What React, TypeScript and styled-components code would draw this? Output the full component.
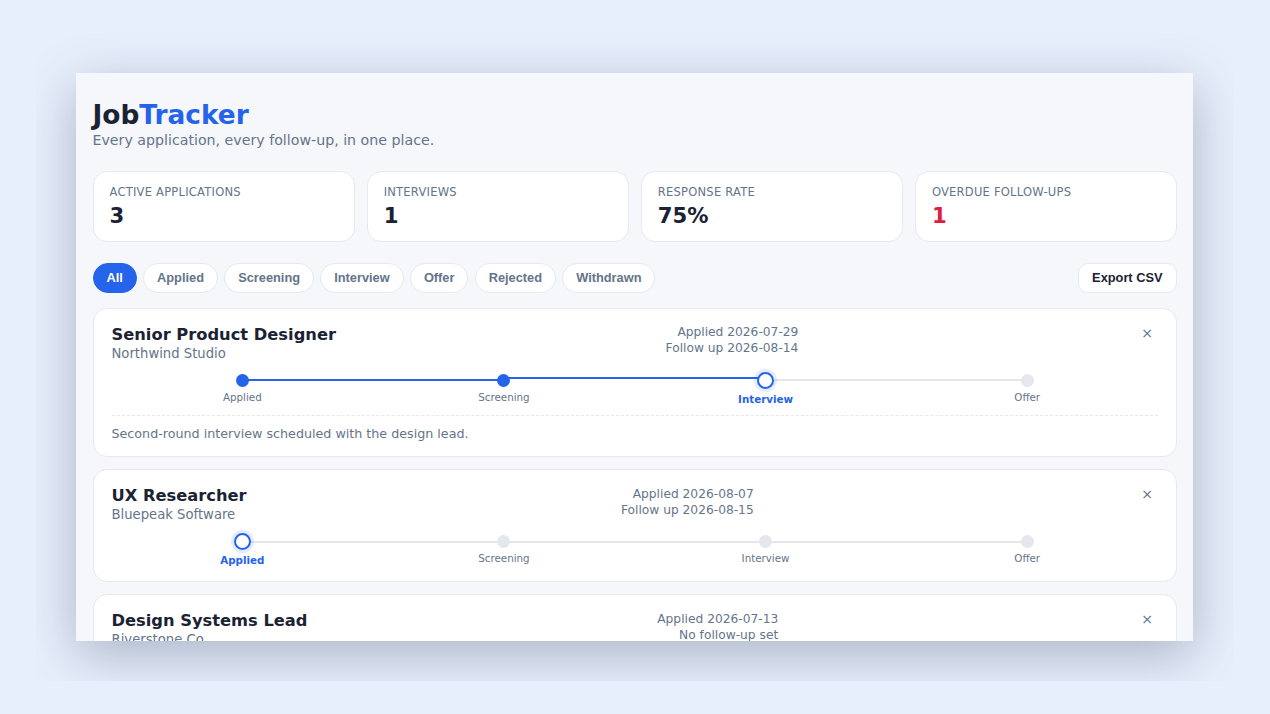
import * as React from 'react';
import styled, { createGlobalStyle } from 'styled-components';

const GlobalStyle = createGlobalStyle`
  html, body {
    margin: 0;
    height: 100%;
    background: #e8effc;
  }
  body {
    font-family: 'DejaVu Sans', sans-serif;
    color: #1a2233;
  }
`;

const Stage = styled.div`
  width: 1197px;
  height: 648px;
  margin: 33px 0 0 36px;
  padding: 40px;
  box-sizing: border-box;
  overflow: hidden;
`;

const Window = styled.div`
  height: 568px;
  overflow: hidden;
  padding: 25px 16px 0 16.5px;
  box-sizing: border-box;
  background: #f5f7fb;
  box-shadow: 0 14px 50px rgba(30, 45, 80, 0.3);
`;

const Title = styled.h1`
  margin: 0;
  font-size: 26.4px;
  line-height: 34px;
  font-weight: 700;
  color: #1a2233;
  span {
    color: #2563eb;
  }
`;

const Subtitle = styled.p`
  margin: 0;
  font-size: 14.2px;
  line-height: 17px;
  color: #64748b;
`;

const Stats = styled.div`
  display: grid;
  grid-template-columns: repeat(4, 1fr);
  gap: 12px;
  margin-top: 21.5px;
`;

const StatCard = styled.div`
  background: #fff;
  border: 1px solid #e6e9f0;
  border-radius: 14px;
  padding: 13.5px 16px;
  height: 71.5px;
  box-sizing: border-box;
`;

const StatLabel = styled.div`
  font-size: 11.52px;
  line-height: 14px;
  letter-spacing: 0.23px;
  color: #64748b;
  text-transform: uppercase;
`;

const StatValue = styled.div<{ $alert?: boolean }>`
  margin-top: 3.5px;
  font-size: 21.2px;
  line-height: 26px;
  font-weight: 700;
  color: ${(p) => (p.$alert ? '#e11d3f' : '#1a2233')};
`;

const Toolbar = styled.div`
  display: flex;
  align-items: center;
  justify-content: space-between;
  margin-top: 21px;
`;

const Filters = styled.div`
  display: flex;
  gap: 6.2px;
`;

const Pill = styled.button<{ $active?: boolean }>`
  height: 30px;
  padding: 0 13px 1px;
  border-radius: 15px;
  border: 1px solid ${(p) => (p.$active ? '#2563eb' : '#e6e9f0')};
  background: ${(p) => (p.$active ? '#2563eb' : '#fff')};
  color: ${(p) => (p.$active ? '#fff' : '#64748b')};
  font-family: 'Liberation Sans', Arial, sans-serif;
  font-size: 12.8px;
  font-weight: 700;
`;

const ExportButton = styled.button`
  height: 30px;
  padding: 0 13.5px 1px;
  border-radius: 10px;
  border: 1px solid #e6e9f0;
  background: #fff;
  color: #1a2233;
  font-family: 'Liberation Sans', Arial, sans-serif;
  font-size: 12.8px;
  font-weight: 700;
`;

const List = styled.div`
  display: flex;
  flex-direction: column;
  gap: 12px;
  margin-top: 14.5px;
`;

const Card = styled.div`
  background: #fff;
  border: 1px solid #e6e9f0;
  border-radius: 14px;
  padding: 16px 18px 15px;
`;

const CardHead = styled.div`
  display: flex;
  justify-content: space-between;
  align-items: flex-start;
`;

const JobTitle = styled.div`
  font-size: 16.3px;
  line-height: 20px;
  font-weight: 700;
  color: #1a2233;
`;

const Company = styled.div`
  font-size: 13.2px;
  line-height: 18px;
  color: #64748b;
`;

const Meta = styled.div`
  margin-top: -0.5px;
  font-size: 12.24px;
  line-height: 16px;
  color: #64748b;
  text-align: right;
`;

const Remove = styled.button`
  width: 30px;
  height: 16px;
  padding: 0 5px 0 0;
  border: none;
  background: none;
  color: #64748b;
  font-family: 'DejaVu Sans', sans-serif;
  font-size: 14px;
  line-height: 16px;
  text-align: right;
`;

const Steps = styled.div`
  display: flex;
  align-items: center;
  margin-top: 9px;
`;

const Step = styled.div<{ $reached?: boolean; $first?: boolean }>`
  flex: 1;
  position: relative;
  display: flex;
  flex-direction: column;
  align-items: center;
  &::before {
    content: '';
    display: ${(p) => (p.$first ? 'none' : 'block')};
    position: absolute;
    left: -50%;
    width: 100%;
    top: 5.5px;
    height: 2px;
    background: ${(p) => (p.$reached ? '#2563eb' : '#e4e7ec')};
  }
`;

const Dot = styled.span<{ $state: 'done' | 'current' | 'todo' }>`
  position: relative;
  z-index: 1;
  box-sizing: border-box;
  border-radius: 50%;
  width: ${(p) => (p.$state === 'current' ? '17px' : '13px')};
  height: ${(p) => (p.$state === 'current' ? '17px' : '13px')};
  background: ${(p) => (p.$state === 'done' ? '#2563eb' : p.$state === 'current' ? '#fff' : '#e4e7ec')};
  border: ${(p) => (p.$state === 'current' ? '2px solid #2563eb' : 'none')};
  box-shadow: ${(p) => (p.$state === 'current' ? '0 0 0 3px rgba(37, 99, 235, 0.12)' : 'none')};
`;

const StepLabel = styled.span<{ $current?: boolean }>`
  margin-top: 4px;
  font-size: 10.3px;
  line-height: 12px;
  font-weight: ${(p) => (p.$current ? 700 : 400)};
  color: ${(p) => (p.$current ? '#2563eb' : '#64748b')};
`;

const Note = styled.div`
  margin-top: 10px;
  padding-top: 10px;
  border-top: 1px dashed #e4e7ec;
  font-size: 12.7px;
  line-height: 15.5px;
  color: #64748b;
`;

const stages = ['Applied', 'Screening', 'Interview', 'Offer'];
const filters = ['All', 'Applied', 'Screening', 'Interview', 'Offer', 'Rejected', 'Withdrawn'];
const stats = [
  { label: 'Active applications', value: '3' },
  { label: 'Interviews', value: '1' },
  { label: 'Response rate', value: '75%' },
  { label: 'Overdue follow-ups', value: '1', alert: true }
];
const jobs = [
  { title: 'Senior Product Designer', company: 'Northwind Studio', applied: '2026-07-29', follow: 'Follow up 2026-08-14', stage: 2, note: 'Second-round interview scheduled with the design lead.' },
  { title: 'UX Researcher', company: 'Bluepeak Software', applied: '2026-08-07', follow: 'Follow up 2026-08-15', stage: 0 },
  { title: 'Design Systems Lead', company: 'Riverstone Co', applied: '2026-07-13', follow: 'No follow-up set', stage: 0 }
];

export default function App() {
  return (
    <>
      <GlobalStyle />
      <Stage>
        <Window>
          <Title>
            Job<span>Tracker</span>
          </Title>
          <Subtitle>Every application, every follow-up, in one place.</Subtitle>
          <Stats>
            {stats.map((s) => (
              <StatCard key={s.label}>
                <StatLabel>{s.label}</StatLabel>
                <StatValue $alert={s.alert}>{s.value}</StatValue>
              </StatCard>
            ))}
          </Stats>
          <Toolbar>
            <Filters>
              {filters.map((f) => (
                <Pill key={f} $active={f === 'All'}>
                  {f}
                </Pill>
              ))}
            </Filters>
            <ExportButton>Export CSV</ExportButton>
          </Toolbar>
          <List>
            {jobs.map((job) => (
              <Card key={job.title}>
                <CardHead>
                  <div>
                    <JobTitle>{job.title}</JobTitle>
                    <Company>{job.company}</Company>
                  </div>
                  <Meta>
                    <div>Applied {job.applied}</div>
                    <div>{job.follow}</div>
                  </Meta>
                  <Remove>×</Remove>
                </CardHead>
                <Steps>
                  {stages.map((name, i) => (
                    <Step key={name} $first={i === 0} $reached={i <= job.stage}>
                      <Dot $state={i < job.stage ? 'done' : i === job.stage ? 'current' : 'todo'} />
                      <StepLabel $current={i === job.stage}>{name}</StepLabel>
                    </Step>
                  ))}
                </Steps>
                {job.note && <Note>{job.note}</Note>}
              </Card>
            ))}
          </List>
        </Window>
      </Stage>
    </>
  );
}
